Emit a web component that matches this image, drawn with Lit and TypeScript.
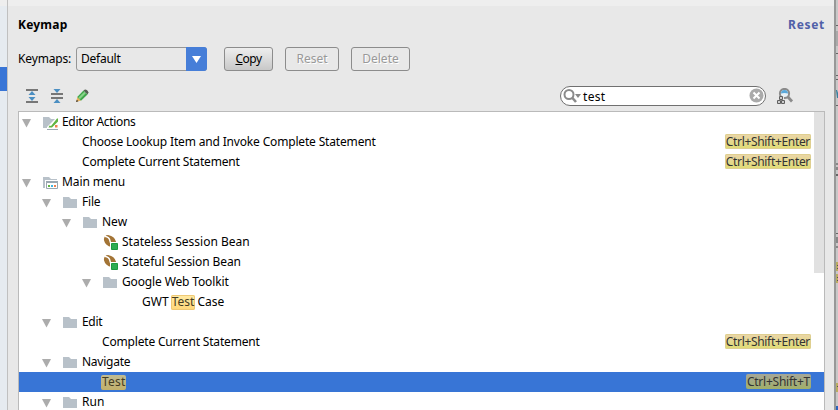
import { LitElement, html, css, svg, nothing } from "lit";
import { customElement } from "lit/decorators.js";
import { classMap } from "lit/directives/class-map.js";

type Icon = "folder" | "editor" | "menu" | "bean" | "";
interface Row {
  depth: number;
  icon: Icon;
  open?: boolean;
  text: string;
  hit?: string;
  after?: string;
  keys?: string;
  selected?: boolean;
  tracking?: number;
}

const rows: Row[] = [
  { depth: 0, icon: "editor", open: true, text: "Editor Actions", tracking: -0.33 },
  { depth: 1, icon: "", text: "Choose Lookup Item and Invoke Complete Statement", keys: "Ctrl+Shift+Enter", tracking: -0.165 },
  { depth: 1, icon: "", text: "Complete Current Statement", keys: "Ctrl+Shift+Enter", tracking: -0.18 },
  { depth: 0, icon: "menu", open: true, text: "Main menu", tracking: -0.1 },
  { depth: 1, icon: "folder", open: true, text: "File", tracking: -0.2 },
  { depth: 2, icon: "folder", open: true, text: "New" },
  { depth: 3, icon: "bean", text: "Stateless Session Bean" },
  { depth: 3, icon: "bean", text: "Stateful Session Bean", tracking: -0.1 },
  { depth: 3, icon: "folder", open: true, text: "Google Web Toolkit", tracking: -0.14 },
  { depth: 4, icon: "", text: "GWT ", hit: "Test", after: " Case" },
  { depth: 1, icon: "folder", open: true, text: "Edit", tracking: -0.3 },
  { depth: 2, icon: "", text: "Complete Current Statement", keys: "Ctrl+Shift+Enter", tracking: -0.18 },
  { depth: 1, icon: "folder", open: true, text: "Navigate", tracking: -0.25 },
  { depth: 2, icon: "", text: "", hit: "Test", keys: "Ctrl+Shift+T", selected: true, tracking: 0.2 },
  { depth: 1, icon: "folder", open: true, text: "Run" },
];

const folder = svg`<path d="M0 2h6l2 2h6v9H0z" fill="#b8c1c9"/>`;

function glyph(icon: Icon) {
  const body =
    icon === "folder"
      ? folder
      : icon === "editor"
        ? svg`${folder}<path d="M4 15v-3l8-8h3v11z" fill="#fff"/><path d="M5.500 12.500l1-2 1.500.5 6-7.500h1v3l-6 6z" fill="#62b543"/><path d="M12 10h2.500v2.500H12z" fill="#f0814f"/><path d="M4 14h11v1H4z" fill="#9aa7b0"/>`
        : icon === "menu"
          ? svg`${folder}<path d="M2 5h13v9H2z" fill="#fff"/><path d="M3 6h12v2H3z" fill="#9aa7b0"/><path d="M3.500 7.500h11v6h-11z" fill="#fff" stroke="#9aa7b0"/><path d="M5 10h2v2H5z" fill="#62b543"/><path d="M8 10h2v2H8z" fill="#40b6e0"/><path d="M11 10h2v2h-2z" fill="#f0814f"/>`
          : svg`<g transform="translate(1 -1) rotate(42 6 7)"><ellipse cx="6" cy="7" rx="6.800" ry="5" fill="#a37436"/><path d="M-1 7Q3 4.500 6 7T13 7" fill="none" stroke="#fff" stroke-width="1.500"/></g><path d="M7 7h8v8H7z" fill="#fff"/><path d="M8.500 8.500h6v6h-6z" fill="#2dac51" stroke="#1c983f"/>`;
  return html`<svg width="16" height="16" viewBox="0 0 16 16">${body}</svg>`;
}

const expandAll = html`<svg class="tool" width="16" height="16"><path d="M1 0h12v2H1zM1 12h12v2H1z" fill="#777"/><path d="M7 2l3.500 4h-7zM7 12l3.500-4h-7z" fill="#4b8fc2"/></svg>`;
const collapseAll = html`<svg class="tool" width="16" height="16"><path d="M1 4h12v2H1zM1 8h12v2H1z" fill="#777"/><path d="M7 4l3.500-4h-7zM7 10l3.500 4h-7z" fill="#4b8fc2"/></svg>`;
const pencil = html`<svg width="16" height="16"><path d="M1 13l1.500-5L6 11.500z" fill="#e9b25c"/><path d="M1 13l.8-2.300 1.600 1.500z" fill="#333"/><path d="M2.200 8L8.500 1.500 12.500 5.500 6 11.800z" fill="#3fa64b"/><path d="M3.500 8.500L9.300 2.700l1.500 1.500-6 6z" fill="#86d488"/><path d="M8.500 1.500L10 .500q2.500 0 3.500 3L12.500 5.500z" fill="#555e52"/></svg>`;
const lens = html`<svg width="20" height="18"><circle cx="6" cy="7.500" r="4.500" fill="#fff" stroke="#8b8b8b" stroke-width="2"/><path d="M9 10.500l4 4.500" stroke="#8b8b8b" stroke-width="2.600"/><path d="M12 7h6l-3 4z" fill="#888"/></svg>`;
const clear = html`<svg class="clear" width="15" height="15"><circle cx="7.500" cy="7.500" r="7" fill="#aaa"/><path d="M4.500 4.500l6 6m0-6l-6 6" stroke="#fff" stroke-width="2"/></svg>`;
const findShortcut = html`<svg class="find" width="17" height="17"><circle cx="7.500" cy="5.500" r="4.600" fill="#e8f1f6" stroke="#8b8b8b" stroke-width="2"/><path d="M4 5.500a3.500 3.500 0 0 1 7 0q-3.500-1-7 0z" fill="#5aa8da"/><path d="M11 9l4 4.500" stroke="#8b8b8b" stroke-width="2.800"/><path d="M1.500 8H7v3h2v5H0v-5h1.500z" fill="#e8e8e8"/><path d="M2.500 8.500h3v3h-3zM.500 12.500h3v3h-3zM4.500 12.500h3v3h-3z" fill="#ccc" stroke="#606060"/></svg>`;

const behind = html`<svg width="2" height="410"><path d="M0 31h2v15H0z" fill="#aaa"/><path d="M0 25h2v1H0zM0 53h2v1H0zM0 75h2v1H0zM0 79h2v1H0zM0 105h2v1H0zM0 174h2v2H0zM0 233h2v1H0z" fill="#666"/><path d="M0 90h1l1 3v5H1z" fill="#38809f"/><path d="M0 163h2v2H0zM0 167h2v3H0zM0 237h2v6H0zM0 246h2v2H0z" fill="#888"/><path d="M0 262h2v9H0zM0 274h2v9H0zM0 383h2v9H0z" fill="#b9ad63"/><path d="M1 265h1v1H1zM1 268h1v1H1zM1 277h1v1H1zM1 280h1v1H1zM1 386h1v1H1z" fill="#555"/><path d="M0 406h2v4H0z" fill="#2b62bd"/></svg>`;

@customElement("app-root")
export class AppRoot extends LitElement {
  static styles = css`
    :host {
      display: flex;
      width: 838px;
      height: 410px;
      overflow: hidden;
      background: #e8e8e8;
      font: 12px/20px "Noto Sans", "Open Sans", sans-serif;
      color: #000;
      white-space: pre;
    }
    * { box-sizing: border-box; }
    svg { display: block; flex: none; }
    .side { width: 8px; flex: none; padding-top: 67px; background: #e6ebf0; border-right: 1px solid #c0c0c0; box-shadow: inset 0 6px #eee; }
    .side-mark { height: 24px; background: #3875d6; }
    .panel { flex: 1; min-width: 0; display: flex; flex-direction: column; padding: 0 10px; border-top: 6px solid #eee; }
    .head { display: flex; flex: none; justify-content: space-between; height: 41px; padding-top: 9px; font-weight: 700; letter-spacing: 0.2px; }
    .link { color: #5060a8; letter-spacing: 0.7px; margin-right: -1px; }
    .controls { display: flex; flex: none; height: 24px; line-height: 24px; }
    .label { width: 58px; letter-spacing: -0.15px; }
    .select { width: 131px; display: flex; border: 1px solid #969696; border-radius: 3px; padding-left: 4px; line-height: 22px; margin-right: 17px; letter-spacing: -0.25px; }
    .arrow { margin: -1px -1px -1px auto; width: 21px; background: #467ed8; border-radius: 0 3px 3px 0; }
    .button { border: 1px solid #8c8c8c; border-radius: 3px; text-align: center; line-height: 22px; margin-right: 12px; }
    .copy { width: 49px; background: linear-gradient(#eee, #c8c8c8); letter-spacing: -0.5px; }
    .reset { width: 54px; }
    .delete { width: 59px; }
    .off { color: #999; text-shadow: 1px 1px #fff; }
    .tools { display: flex; flex: none; height: 40px; padding: 15px 0 0 7px; }
    .tool { margin-right: 9px; }
    .tools > svg { margin-top: 3px; }
    .search { display: flex; margin-left: 469px; width: 206px; height: 20px; border: 1px solid #707070; border-radius: 10px; background: #fff; padding-left: 2px; line-height: 20px; }
    .search-text { flex: 1; letter-spacing: 0.3px; }
    .clear { margin: 1px 1px 0 0; }
    .tools > .find { margin: 2px 0 0 11px; }
    .tree { flex: 1; min-height: 0; overflow: hidden; position: relative; border: 1px solid #bababa; border-bottom: 0; width: 807px; background: #fff; }
    .bar { position: absolute; right: 0; top: 0; width: 10px; height: 161px; background: #e1e1e1; }
    .row { display: flex; height: 20px; padding-right: 13px; }
    .selected { background: #3875d6; }
    .indent { flex: none; }
    .twist { width: 21px; flex: none; padding: 7px 0 0 3px; }
    .icon { width: 22px; flex: none; padding: 3px 0 0 3px; }
    .caption { flex: 1; display: flex; }
    .hit { height: 15px; margin: 3px -1px 0; padding: 0 1px; line-height: 14px; border-radius: 2px; background: linear-gradient(#ffeaa5, #ffd778); box-shadow: inset 0 0 0 1px #eec975; color: #443c22; }
    .selected .hit { background: linear-gradient(#c0bb93, #c2b06b); box-shadow: none; }
    .keys { height: 15px; margin-top: 2px; padding: 0 1px; line-height: 15px; border-radius: 2px; background: linear-gradient(#ebd5aa, #dfdc73); box-shadow: inset 0 0 0 1px #dfcf90; color: #333; letter-spacing: -0.32px; }
    .selected .keys { background: linear-gradient(#a5a698, #a1af69); box-shadow: none; letter-spacing: -0.24px; }
    .edge { width: 4px; flex: none; border-left: 2px solid #989898; background: #c8c8c8; }
  `;

  private row(r: Row) {
    return html`<div class=${classMap({ row: true, selected: !!r.selected })}><span class="indent" style="width:${r.depth * 20}px"></span><span class="twist">${r.open ? html`<svg width="10" height="9"><path d="M0 0h9L4.500 8.500z" fill="#acacac"/></svg>` : nothing}</span><span class="icon">${r.icon ? glyph(r.icon) : nothing}</span><span class="caption" style="letter-spacing:${r.tracking ?? 0}px">${r.text}${r.hit ? html`<span class="hit">${r.hit}</span>` : nothing}${r.after ?? nothing}</span>${r.keys ? html`<span class="keys">${r.keys}</span>` : nothing}</div>`;
  }

  render() {
    return html`<div class="side"><div class="side-mark"></div></div><main class="panel"><div class="head"><span>Keymap</span><span class="link">Reset</span></div><div class="controls"><span class="label">Keymaps:</span><div class="select">Default<span class="arrow"><svg width="21" height="24"><path d="M6 9h9l-4.500 7z" fill="#fff"/></svg></span></div><div class="button copy"><u>C</u>opy</div><div class="button reset off">Reset</div><div class="button delete off">Delete</div></div><div class="tools">${expandAll}${collapseAll}${pencil}<div class="search">${lens}<span class="search-text">test</span>${clear}</div>${findShortcut}</div><div class="tree">${rows.map((r) => this.row(r))}<div class="bar"></div></div></main><div class="edge">${behind}</div>`;
  }
}
